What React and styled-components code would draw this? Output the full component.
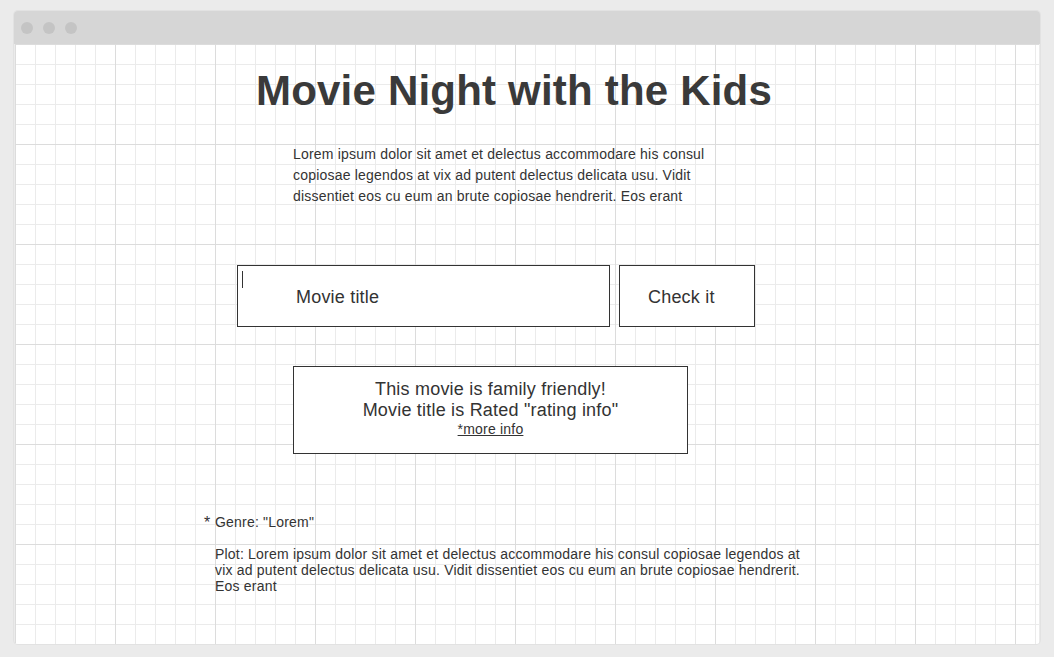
import React from "react";
import styled, { createGlobalStyle } from "styled-components";

const GlobalStyle = createGlobalStyle`
  html, body {
    margin: 0;
    padding: 0;
    background: #ebebeb;
    font-family: "Liberation Sans", Arial, sans-serif;
    letter-spacing: 0.2px;
    color: #333;
  }
`;

const Page = styled.div`
  padding: 11px 14px 12px 14px;
`;

const Window = styled.div`
  width: 1026px;
  border-radius: 4px;
  overflow: hidden;
  box-shadow: 0 0 0 1px #e2e2e2;
`;

const TitleBar = styled.div`
  height: 33px;
  background: #d6d6d6;
  display: flex;
  align-items: center;
  gap: 10px;
  padding-left: 7px;
`;

const Dot = styled.span`
  width: 12px;
  height: 12px;
  border-radius: 50%;
  background: #c4c4c4;
`;

const Canvas = styled.div`
  height: 600px;
  margin: 0 1px;
  background-color: #fff;
  background-image:
    linear-gradient(to right, #dcdcdc 1px, transparent 1px),
    linear-gradient(to bottom, #dcdcdc 1px, transparent 1px),
    linear-gradient(to right, #ebebeb 1px, transparent 1px),
    linear-gradient(to bottom, #ebebeb 1px, transparent 1px);
  background-size: 100px 100px, 100px 100px, 20px 20px, 20px 20px;
  display: flex;
  flex-direction: column;
`;

const Title = styled.h1`
  width: 998px;
  margin: 20px 0 0 0;
  text-align: center;
  font-size: 42px;
  font-weight: bold;
  line-height: 54px;
  color: #3a3a3a;
`;

const Intro = styled.p`
  margin: 26px 0 0 278px;
  width: 430px;
  font-size: 14px;
  line-height: 21px;
  color: #333;
`;

const SearchRow = styled.div`
  display: flex;
  gap: 9px;
  margin: 58px 0 0 222px;
`;

const Field = styled.div`
  position: relative;
  box-sizing: border-box;
  width: 373px;
  height: 62px;
  border: 1px solid #333;
  background: #fff;
  display: flex;
  align-items: center;
  padding: 2px 0 0 58px;
  font-size: 18px;
  color: #333;
`;

const Caret = styled.span`
  position: absolute;
  left: 4px;
  top: 5px;
  width: 1px;
  height: 17px;
  background: #333;
`;

const CheckButton = styled.button`
  box-sizing: border-box;
  width: 136px;
  height: 62px;
  border: 1px solid #333;
  background: #fff;
  font-family: inherit;
  letter-spacing: inherit;
  font-size: 18px;
  color: #333;
  text-align: left;
  padding: 2px 0 0 28px;
`;

const Result = styled.div`
  box-sizing: border-box;
  margin: 39px 0 0 278px;
  width: 395px;
  height: 88px;
  border: 1px solid #333;
  background: #fff;
  display: flex;
  flex-direction: column;
  align-items: center;
  padding-top: 12px;
  font-size: 18px;
  line-height: 21px;
  color: #333;
`;

const MoreInfo = styled.a`
  font-size: 14px;
  line-height: 17px;
  color: #333;
  text-decoration: underline;
`;

const Details = styled.div`
  margin: 60px 0 0 189px;
  font-size: 14px;
  color: #333;
`;

const Genre = styled.div`
  display: flex;
  align-items: center;
  line-height: 17px;
`;

const Star = styled.span`
  width: 11px;
  font-size: 16px;
`;

const Plot = styled.p`
  margin: 15px 0 0 11px;
  width: 595px;
  line-height: 16px;
`;

export default function App() {
  return (
    <Page>
      <GlobalStyle />
      <Window>
        <TitleBar>
          <Dot />
          <Dot />
          <Dot />
        </TitleBar>
        <Canvas>
          <Title>Movie Night with the Kids</Title>
          <Intro>
            Lorem ipsum dolor sit amet et delectus accommodare his consul
            copiosae legendos at vix ad putent delectus delicata usu. Vidit
            dissentiet eos cu eum an brute copiosae hendrerit. Eos erant
          </Intro>
          <SearchRow>
            <Field>
              <Caret />
              Movie title
            </Field>
            <CheckButton>Check it</CheckButton>
          </SearchRow>
          <Result>
            <div>This movie is family friendly!</div>
            <div>Movie title is Rated "rating info"</div>
            <MoreInfo href="#">*more info</MoreInfo>
          </Result>
          <Details>
            <Genre>
              <Star>*</Star>
              Genre: "Lorem"
            </Genre>
            <Plot>
              Plot: Lorem ipsum dolor sit amet et delectus accommodare his
              consul copiosae legendos at vix ad putent delectus delicata usu.
              Vidit dissentiet eos cu eum an brute copiosae hendrerit. Eos erant
            </Plot>
          </Details>
        </Canvas>
      </Window>
    </Page>
  );
}
